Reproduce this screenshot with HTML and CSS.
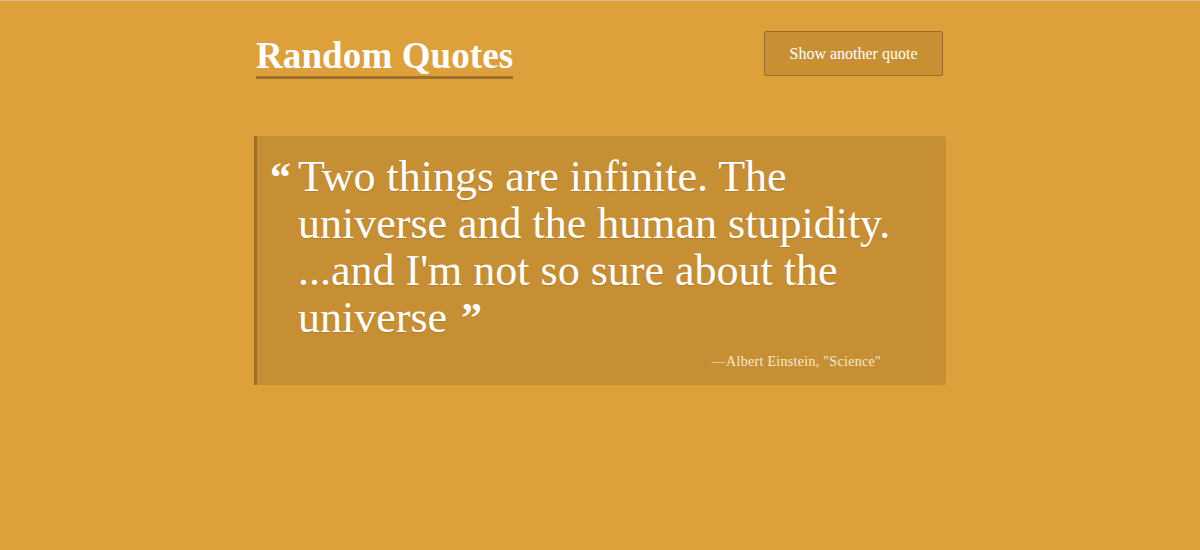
FILE: index.html
```html
<!DOCTYPE html>
<html lang="en">
<head>
<meta charset="utf-8">
<title>Random Quotes</title>
<link rel="stylesheet" href="styles.css">
</head>
<body>
<div class="page">
  <header class="header">
    <h1 class="title">Random Quotes</h1>
    <button class="btn" type="button">Show another quote</button>
  </header>
  <blockquote class="quote">
    <div class="quote-body">
      <span class="mark-open">&ldquo;</span>
      <p class="quote-text">Two things are infinite. The universe and the human stupidity. ...and I'm not so sure about the universe</p>
    </div>
    <footer class="cite">&mdash;Albert Einstein, "Science"</footer>
  </blockquote>
</div>
</body>
</html>
```

FILE: styles.css
```css
html, body {
  margin: 0;
  padding: 0;
}
body {
  background: #dda03a;
  border-top: 1px solid #d8b888;
  min-height: 549px;
  font-family: "Liberation Serif", "Times New Roman", serif;
  color: #ffffff;
}
.page {
  width: 692px;
  margin: 0 auto;
}
.header {
  display: flex;
  justify-content: space-between;
  align-items: flex-start;
  padding: 30px 3px 0 2px;
}
.title {
  margin: 0;
  padding-top: 5px;
  font-size: 37px;
  line-height: 40px;
  font-weight: bold;
  border-bottom: 3px solid #a0712e;
  letter-spacing: 0.1px;
}
.btn {
  width: 179px;
  height: 45px;
  background: #c89033;
  border: 1px solid #9a6a28;
  border-radius: 2px;
  color: #ffffff;
  font-family: "Liberation Serif", "Times New Roman", serif;
  font-size: 16px;
  padding: 0;
  cursor: pointer;
}
.quote {
  margin: 57px 0 0 0;
  background: #c78f33;
  border-left: 3px solid #9e6d26;
  border-radius: 0 3px 3px 0;
  padding: 17px 36px 14px 13px;
}
.quote-body {
  display: flex;
  align-items: baseline;
}
.mark-open {
  flex: 0 0 28px;
  font-size: 42px;
  font-weight: bold;
  line-height: 1;
}
.quote-text {
  margin: 0;
  font-size: 44px;
  line-height: 47px;
  text-shadow: 0 1px 1px rgba(120, 80, 20, 0.25);
}
.quote-text::after {
  content: "\201D";
  margin-left: 14px;
  font-size: 42px;
  line-height: 1;
  font-weight: bold;
}
.cite {
  text-align: right;
  margin: 12px 29px 0 0;
  font-size: 14px;
  line-height: 18px;
  letter-spacing: 0.3px;
  color: #f6ead6;
}
```
